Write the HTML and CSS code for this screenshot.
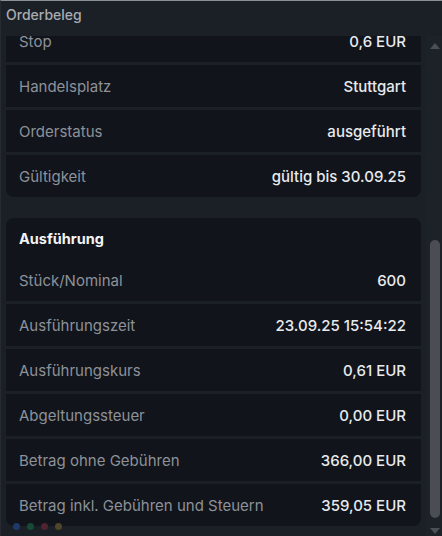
FILE: index.html
```html
<!DOCTYPE html>
<html lang="de">
<head>
<meta charset="utf-8">
<title>Orderbeleg</title>
<link rel="stylesheet" href="styles.css">
</head>
<body>
<div class="window">
  <div class="titlebar">Orderbeleg</div>
  <div class="body">
    <div class="viewport">
      <div class="scroller">
        <div class="card">
          <div class="row"><span class="label">Stop</span><span class="value">0,6 EUR</span></div>
          <div class="row"><span class="label">Handelsplatz</span><span class="value">Stuttgart</span></div>
          <div class="row"><span class="label">Orderstatus</span><span class="value">ausgeführt</span></div>
          <div class="row"><span class="label">Gültigkeit</span><span class="value">gültig bis 30.09.25</span></div>
        </div>
        <div class="card">
          <div class="card-title">Ausführung</div>
          <div class="row"><span class="label">Stück/Nominal</span><span class="value">600</span></div>
          <div class="row"><span class="label">Ausführungszeit</span><span class="value">23.09.25 15:54:22</span></div>
          <div class="row"><span class="label">Ausführungskurs</span><span class="value">0,61 EUR</span></div>
          <div class="row"><span class="label">Abgeltungssteuer</span><span class="value">0,00 EUR</span></div>
          <div class="row"><span class="label">Betrag ohne Gebühren</span><span class="value">366,00 EUR</span></div>
          <div class="row"><span class="label">Betrag inkl. Gebühren und Steuern</span><span class="value">359,05 EUR</span></div>
        </div>
      </div>
      <div class="dots">
        <span class="dot blue"></span><span class="dot green"></span><span class="dot red"></span><span class="dot yellow"></span>
      </div>
    </div>
    <div class="scrollbar">
      <span class="arrow up"></span>
      <div class="track"><div class="thumb"></div></div>
      <span class="arrow down"></span>
    </div>
  </div>
</div>
</body>
</html>
```
FILE: styles.css
```css
* { box-sizing: border-box; }
html, body {
  margin: 0;
  padding: 0;
  background: #1b1f26;
}
body {
  font-family: Inter, "Noto Sans", sans-serif;
  width: 442px;
  height: 536px;
  overflow: hidden;
}
.window {
  width: 442px;
  height: 536px;
  display: flex;
  flex-direction: column;
  border-top: 1px solid #8c9096;
  border-left: 1px solid #262a31;
  background: #1b1f26;
}
.titlebar {
  height: 35px;
  flex: none;
  padding: 5px 0 0 5px;
  font-size: 14px;
  font-weight: 500;
  color: #a8acb2;
  background: #1b2027;
}
.body {
  flex: 1;
  display: flex;
  min-height: 0;
}
.viewport {
  flex: 1;
  position: relative;
  overflow: hidden;
  padding: 0 5px;
}
.scroller {
  margin-top: -16px;
  display: flex;
  flex-direction: column;
  gap: 21px;
}
.card {
  border-radius: 8px;
  overflow: hidden;
  display: flex;
  flex-direction: column;
}
.row + .row { margin-top: 3px; }
.row, .card-title {
  background: #11141b;
}
.row {
  height: 42px;
  display: flex;
  align-items: center;
  justify-content: space-between;
  padding: 0 15px 0 13px;
  font-size: 15px;
}
.label { color: #8d9199; }
.value { color: #e8eaed; font-weight: 500; }
.card-title {
  height: 41px;
  display: flex;
  align-items: center;
  padding-left: 13px;
  font-size: 14.5px;
  font-weight: 700;
  color: #f2f3f5;
}
.dots {
  position: absolute;
  left: 12px;
  bottom: 6px;
  display: flex;
  gap: 7px;
}
.dot {
  width: 7px;
  height: 7px;
  border-radius: 50%;
}
.blue { background: #1d3a6b; }
.green { background: #164a37; }
.red { background: #4f2330; }
.yellow { background: #4f4528; }
.scrollbar {
  width: 16px;
  flex: none;
  display: flex;
  flex-direction: column;
  align-items: center;
  background: #1d2128;
  padding: 7px 0 2px 2px;
}
.arrow {
  width: 0;
  height: 0;
  border-left: 5px solid transparent;
  border-right: 5px solid transparent;
}
.arrow.up { border-bottom: 6px solid #4b4f56; }
.arrow.down { border-top: 6px solid #4b4f56; }
.track {
  flex: 1;
  width: 10px;
  display: flex;
  flex-direction: column;
  justify-content: flex-end;
  padding-bottom: 10px;
}
.thumb {
  height: 278px;
  border-radius: 5px;
  background: #4a4d54;
}
```
